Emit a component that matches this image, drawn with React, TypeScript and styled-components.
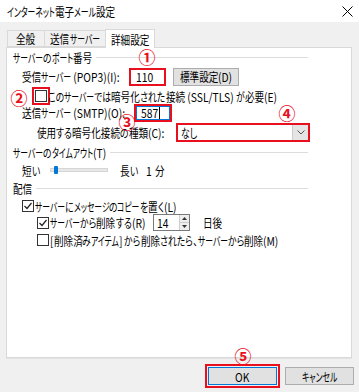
import React, { useLayoutEffect, useRef, useState } from 'react'
import styled, { createGlobalStyle } from 'styled-components'

const RED = '#e8101e'

const GlobalStyle = createGlobalStyle`
  html, body {
    margin: 0;
    padding: 0;
    background: #f0f0f0;
  }
  body {
    font-family: "Noto Sans CJK JP", "Liberation Sans", sans-serif;
    font-size: 12px;
    color: #000;
    font-feature-settings: "palt";
  }
`

// Meiryo UI is a narrow face (kana most of all), so each run of Noto glyphs is squeezed by script
const SQUEEZE = { kata: 0.65, hira: 0.74, kanji: 0.8, latin: 0.86 }
type Script = keyof typeof SQUEEZE

const scriptOf = (ch: string): Script => {
  if (/[\u30A0-\u30FF]/.test(ch)) return 'kata'
  if (/[\u3040-\u309F]/.test(ch)) return 'hira'
  if (/[\x00-\x7F]/.test(ch)) return 'latin'
  return 'kanji'
}

const splitRuns = (text: string) => {
  const runs: { s: Script; t: string }[] = []
  for (const ch of text) {
    const s = scriptOf(ch)
    const last = runs[runs.length - 1]
    if (last && last.s === s) last.t += ch
    else runs.push({ s, t: ch })
  }
  return runs
}

const Narrow = styled.span<{ $k: number }>`
  display: inline-block;
  white-space: pre;
  transform: scaleX(${({ $k }) => $k});
  transform-origin: left center;
`

const Run: React.FC<{ k: number; text: string }> = ({ k, text }) => {
  const ref = useRef<HTMLSpanElement>(null)
  const [trim, setTrim] = useState(0)
  useLayoutEffect(() => {
    if (ref.current) setTrim(-ref.current.offsetWidth * (1 - k))
  }, [k, text])
  return (
    <Narrow ref={ref} $k={k} style={{ marginRight: trim }}>
      {text}
    </Narrow>
  )
}

const TxtWrap = styled.span`
  display: inline-flex;
  align-items: center;
  white-space: nowrap;
`

const Txt: React.FC<{ children: string }> = ({ children }) => (
  <TxtWrap>
    {splitRuns(children).map((r, i) => (
      <Run key={i} k={SQUEEZE[r.s]} text={r.t} />
    ))}
  </TxtWrap>
)

const Window = styled.div`
  position: relative;
  width: 359px;
  height: 392px;
  overflow: hidden;
  background: #f0f0f0;
`

const TitleBar = styled.div`
  height: 22px;
  background: #fff;
  display: flex;
  align-items: center;
  justify-content: space-between;
  padding: 0 6px 0 7px;
  box-sizing: border-box;
`

const Tabs = styled.div`
  display: flex;
  align-items: flex-end;
  height: 25px;
  padding-left: 8px;
`

const Tab = styled.div<{ $active?: boolean; $w: number }>`
  width: ${({ $w }) => $w}px;
  height: ${({ $active }) => ($active ? 19 : 17)}px;
  box-sizing: border-box;
  display: flex;
  align-items: center;
  justify-content: center;
  background: ${({ $active }) => ($active ? '#fff' : '#f0f0f0')};
  border: 1px solid #d9d9d9;
  border-bottom: ${({ $active }) => ($active ? 'none' : '1px solid #d9d9d9')};
  margin-left: -1px;
  margin-bottom: ${({ $active }) => ($active ? -1 : 0)}px;
  position: relative;
  z-index: ${({ $active }) => ($active ? 1 : 0)};
`

const Panel = styled.div`
  margin: 0 7px 0 6px;
  height: 311px;
  box-sizing: border-box;
  background: #fff;
  border: 1px solid #d9d9d9;
  box-shadow: 0 1px 0 #e3e3e3;
  padding: 0 6px;
`

const Row = styled.div<{ $h: number; $mt?: number; $indent?: number }>`
  display: flex;
  align-items: center;
  height: ${({ $h }) => $h}px;
  margin-top: ${({ $mt }) => $mt ?? 0}px;
  padding-left: ${({ $indent }) => $indent ?? 0}px;
  white-space: nowrap;
`

const GroupTitle = styled(Row)`
  width: 295px;
  &::after {
    content: '';
    flex: 1;
    height: 1px;
    background: #dcdcdc;
    margin-left: 4px;
  }
`

const Label = styled.span<{ $w?: number }>`
  display: inline-block;
  width: ${({ $w }) => ($w ? `${$w}px` : 'auto')};
  flex: none;
`

const TextBox = styled.div<{ $w: number; $focus?: boolean }>`
  width: ${({ $w }) => $w}px;
  height: 18px;
  box-sizing: border-box;
  display: flex;
  align-items: center;
  padding-left: 5px;
  border: 2px solid ${RED};
  background: #fff;
  box-shadow: ${({ $focus }) => ($focus ? 'inset 0 0 0 1px #0078d7' : 'none')};
`

const Caret = styled.span`
  display: inline-block;
  width: 1px;
  height: 12px;
  background: #000;
  margin-left: 1px;
`

const Button = styled.div<{ $w: number; $default?: boolean; $marked?: boolean }>`
  width: ${({ $w }) => $w}px;
  height: 18px;
  box-sizing: border-box;
  display: flex;
  align-items: center;
  justify-content: center;
  background: #e1e1e1;
  border: 1px solid ${({ $default }) => ($default ? '#0078d7' : '#adadad')};
  outline: ${({ $marked }) => ($marked ? `2px solid ${RED}` : 'none')};
  outline-offset: 1px;
`

const CheckBox = styled.span<{ $marked?: boolean }>`
  width: 12px;
  height: 12px;
  box-sizing: border-box;
  border: 1px solid #333;
  background: #fff;
  flex: none;
  margin-right: 1px;
  display: flex;
  align-items: center;
  justify-content: center;
  outline: ${({ $marked }) => ($marked ? `2px solid ${RED}` : 'none')};
  outline-offset: 1px;
`

const Select = styled.div`
  width: 134px;
  height: 19px;
  box-sizing: border-box;
  border: 2px solid ${RED};
  display: flex;
  align-items: center;
  background: #fff;
  padding-left: 3px;
`

const SelectArrow = styled.span`
  margin-left: auto;
  width: 15px;
  height: 100%;
  background: #e5e5e5;
  border-left: 1px solid #ccc;
  display: flex;
  align-items: center;
  justify-content: center;
`

const Slider = styled.div`
  position: relative;
  width: 58px;
  height: 14px;
  margin-right: 12px;
  &::before {
    content: '';
    position: absolute;
    left: 0;
    right: 0;
    top: 5px;
    height: 2px;
    background: #e7e7e7;
    border: 1px solid #d6d6d6;
  }
`

const Thumb = styled.span`
  position: absolute;
  left: 4px;
  top: 3px;
  width: 4px;
  height: 8px;
  background: #0078d7;
  border-radius: 1px;
`

const Spin = styled.div`
  width: 37px;
  height: 17px;
  box-sizing: border-box;
  border: 1px solid #7a7a7a;
  display: flex;
  align-items: center;
  padding-left: 3px;
  background: #fff;
`

const SpinButtons = styled.span`
  margin-left: auto;
  width: 9px;
  height: 100%;
  display: flex;
  flex-direction: column;
  border-left: 1px solid #ccc;
  span {
    flex: 1;
    background: #eee;
    display: flex;
    align-items: center;
    justify-content: center;
    border-bottom: 1px solid #ccc;
  }
  span:last-child {
    border-bottom: none;
  }
`

const Footer = styled.div`
  display: flex;
  justify-content: flex-end;
  gap: 8px;
  padding: 9px 5px 0 0;
`

const Badge = styled.span<{ $x: number; $y: number }>`
  position: absolute;
  left: ${({ $x }) => $x}px;
  top: ${({ $y }) => $y}px;
  transform: translate(-50%, -50%);
  color: ${RED};
  font-size: 17px;
  font-weight: bold;
  line-height: 1;
`

const Check = () => (
  <svg width="10" height="10" viewBox="0 0 10 10">
    <path d="M1.5 5 L4 7.5 L8.5 2" fill="none" stroke="#222" strokeWidth="1.2" />
  </svg>
)

const App: React.FC = () => {
  return (
    <>
      <GlobalStyle />
      <Window>
        <TitleBar>
          <Txt>インターネット電子メール設定</Txt>
          <svg width="11" height="11" viewBox="0 0 11 11">
            <path d="M0.5 0.5 L10.5 10.5 M10.5 0.5 L0.5 10.5" stroke="#000" strokeWidth="1" />
          </svg>
        </TitleBar>
        <Tabs>
          <Tab $w={38}><Txt>全般</Txt></Tab>
          <Tab $w={62}><Txt>送信サーバー</Txt></Tab>
          <Tab $w={50} $active><Txt>詳細設定</Txt></Tab>
        </Tabs>
        <Panel>
          <GroupTitle $h={19}><Txt>サーバーのポート番号</Txt></GroupTitle>
          <Row $h={19} $indent={9}>
            <Label $w={107}><Txt>受信サーバー (POP3)(I):</Txt></Label>
            <TextBox $w={37}><Txt>110</Txt></TextBox>
            <Button $w={66} style={{ marginLeft: 7 }}><Txt>標準設定(D)</Txt></Button>
          </Row>
          <Row $h={14} $mt={3} $indent={22}>
            <CheckBox $marked />
            <Txt>このサーバーでは暗号化された接続 (SSL/TLS) が必要(E)</Txt>
          </Row>
          <Row $h={19} $indent={9}>
            <Label $w={112}><Txt>送信サーバー (SMTP)(O):</Txt></Label>
            <TextBox $w={38} $focus>
              <Txt>587</Txt>
              <Caret />
            </TextBox>
          </Row>
          <Row $h={19} $mt={1} $indent={24}>
            <Label $w={139}><Txt>使用する暗号化接続の種類(C):</Txt></Label>
            <Select>
              <Txt>なし</Txt>
              <SelectArrow>
                <svg width="8" height="5" viewBox="0 0 8 5">
                  <path d="M0.5 0.5 L4 4 L7.5 0.5" fill="none" stroke="#555" strokeWidth="1" />
                </svg>
              </SelectArrow>
            </Select>
          </Row>
          <GroupTitle $h={14} $mt={3}><Txt>サーバーのタイムアウト(T)</Txt></GroupTitle>
          <Row $h={14} $mt={4} $indent={9}>
            <Label $w={28}><Txt>短い</Txt></Label>
            <Slider>
              <Thumb />
            </Slider>
            <Label $w={26}><Txt>長い</Txt></Label>
            <Label $w={9}><Txt>1</Txt></Label>
            <Txt>分</Txt>
          </Row>
          <GroupTitle $h={14} $mt={4}><Txt>配信</Txt></GroupTitle>
          <Row $h={14} $mt={4} $indent={9}>
            <CheckBox>
              <Check />
            </CheckBox>
            <Txt>サーバーにメッセージのコピーを置く(L)</Txt>
          </Row>
          <Row $h={17} $mt={1} $indent={24}>
            <CheckBox>
              <Check />
            </CheckBox>
            <Label $w={103}><Txt>サーバーから削除する(R)</Txt></Label>
            <Spin>
              <Txt>14</Txt>
              <SpinButtons>
                <span>
                  <svg width="5" height="3" viewBox="0 0 5 3"><path d="M0 3 L2.5 0 L5 3Z" fill="#333" /></svg>
                </span>
                <span>
                  <svg width="5" height="3" viewBox="0 0 5 3"><path d="M0 0 L2.5 3 L5 0Z" fill="#333" /></svg>
                </span>
              </SpinButtons>
            </Spin>
            <Label $w={13} />
            <Txt>日後</Txt>
          </Row>
          <Row $h={14} $mt={2} $indent={24}>
            <CheckBox />
            <Txt>[削除済みアイテム] から削除されたら、サーバーから削除(M)</Txt>
          </Row>
        </Panel>
        <Footer>
          <Button $w={69} $default $marked><Txt>OK</Txt></Button>
          <Button $w={69}><Txt>キャンセル</Txt></Button>
        </Footer>
        <Badge $x={147} $y={56}>①</Badge>
        <Badge $x={19} $y={97}>②</Badge>
        <Badge $x={127} $y={121}>③</Badge>
        <Badge $x={287} $y={112}>④</Badge>
        <Badge $x={243} $y={355}>⑤</Badge>
      </Window>
    </>
  )
}

export default App
